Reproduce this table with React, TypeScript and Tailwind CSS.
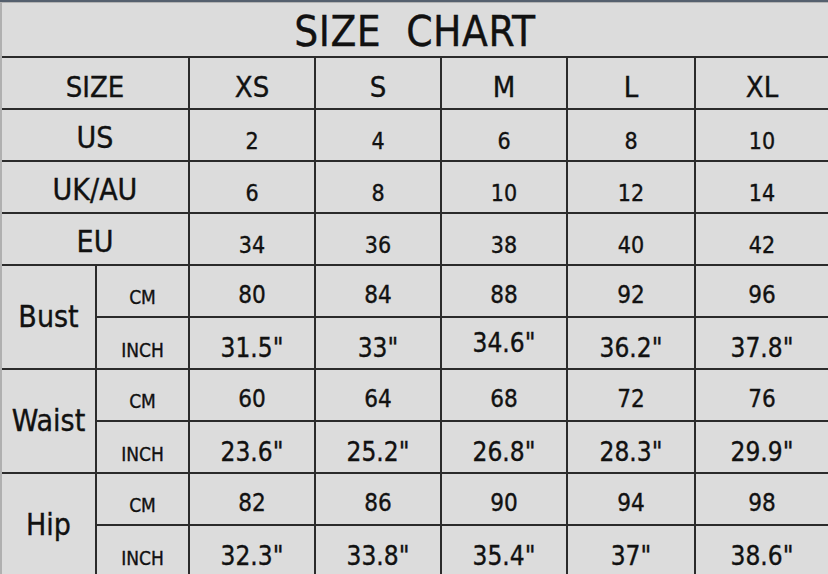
import React from "react";

const sizes = ["XS", "S", "M", "L", "XL"];

const simpleRows: { label: string; values: string[] }[] = [
  { label: "US", values: ["2", "4", "6", "8", "10"] },
  { label: "UK/AU", values: ["6", "8", "10", "12", "14"] },
  { label: "EU", values: ["34", "36", "38", "40", "42"] },
];

const measureRows: { label: string; cm: string[]; inch: string[] }[] = [
  {
    label: "Bust",
    cm: ["80", "84", "88", "92", "96"],
    inch: ["31.5\"", "33\"", "34.6\"", "36.2\"", "37.8\""],
  },
  {
    label: "Waist",
    cm: ["60", "64", "68", "72", "76"],
    inch: ["23.6\"", "25.2\"", "26.8\"", "28.3\"", "29.9\""],
  },
  {
    label: "Hip",
    cm: ["82", "86", "90", "94", "98"],
    inch: ["32.3\"", "33.8\"", "35.4\"", "37\"", "38.6\""],
  },
];

const cell =
  "flex items-center justify-center bg-[#dcdcdc] text-[#111] [-webkit-text-stroke:0.35px_#111]";

export default function App() {
  return (
    <div
      className="w-[828px] h-[574px] overflow-hidden bg-[#dcdcdc]"
      style={{ fontFamily: '"DejaVu Sans Condensed", "DejaVu Sans", sans-serif' }}
    >
      <div className="h-[2px] bg-[#55606e]" />
      <div className="h-[1px] bg-[#b4b4b4]" />
      <div className="flex">
        <div className="w-[2px] bg-[#b0b0b0]" />
        <div className="grid flex-1 grid-cols-[93px_91px_124px_124px_124px_126px_1fr] grid-rows-[53px] auto-rows-[50px] gap-[2px] bg-[#2b2b2b]">
          <div className={`${cell} col-span-7 pt-[4px] text-[42px] tracking-[0.5px]`}>
            SIZE&nbsp;&nbsp;CHART
          </div>

          <div className={`${cell} col-span-2 pt-[10px] text-[29px]`}>SIZE</div>
          {sizes.map((s) => (
            <div key={s} className={`${cell} pt-[10px] text-[29px]`}>
              {s}
            </div>
          ))}

          {simpleRows.map((row) => (
            <React.Fragment key={row.label}>
              <div className={`${cell} col-span-2 pt-[4px] text-[30px]`}>{row.label}</div>
              {row.values.map((v, i) => (
                <div key={i} className={`${cell} pt-[12px] text-[23px]`}>
                  {v}
                </div>
              ))}
            </React.Fragment>
          ))}

          {measureRows.map((row) => (
            <React.Fragment key={row.label}>
              <div className={`${cell} row-span-2 pb-[2px] text-[30px]`}>{row.label}</div>
              <div className={`${cell} pt-[12px] text-[19px]`}>CM</div>
              {row.cm.map((v, i) => (
                <div key={i} className={`${cell} pt-[8px] text-[24px]`}>
                  {v}
                </div>
              ))}
              <div className={`${cell} pt-[14px] text-[19px]`}>INCH</div>
              {row.inch.map((v, i) => (
                <div
                  key={i}
                  className={`${cell} ${v === "34.6\"" ? "pt-[0px]" : "pt-[10px]"} text-[26px]`}
                >
                  {v}
                </div>
              ))}
            </React.Fragment>
          ))}
        </div>
      </div>
    </div>
  );
}
